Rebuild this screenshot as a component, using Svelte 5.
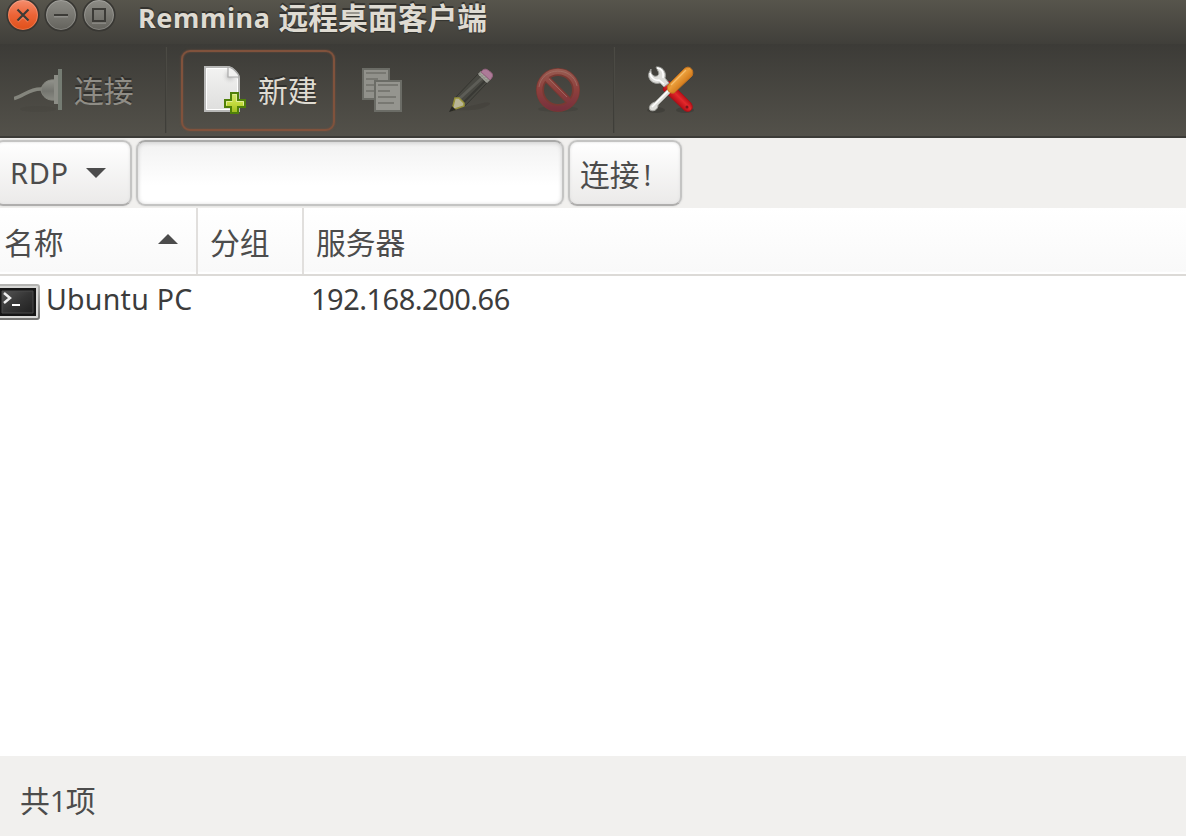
<script>
  const columns = ['名称', '分组', '服务器'];
  const connections = [{ name: 'Ubuntu PC', group: '', server: '192.168.200.66' }];
  let address = $state('');
</script>

<div class="window">
  <header class="titlebar">
    <svg class="controls" width="116" height="34" viewBox="0 0 116 34">
      <defs>
        <linearGradient id="close" x1="0" y1="0" x2="0" y2="1">
          <stop offset="0" stop-color="#f58f70" /><stop offset=".5" stop-color="#ec6437" /><stop offset="1" stop-color="#df4f18" />
        </linearGradient>
        <linearGradient id="ctl" x1="0" y1="0" x2="0" y2="1">
          <stop offset="0" stop-color="#8e8d87" /><stop offset="1" stop-color="#63625c" />
        </linearGradient>
      </defs>
      <g stroke="#383733" stroke-width="1.6">
        <circle cx="23" cy="15" r="15.8" fill="url(#close)" />
        <circle cx="61" cy="15" r="15.8" fill="url(#ctl)" />
        <circle cx="99" cy="15" r="15.8" fill="url(#ctl)" />
      </g>
      <g fill="none" stroke="#fff" stroke-opacity=".18" stroke-width="1">
        <circle cx="23" cy="15" r="14.5" /><circle cx="61" cy="15" r="14.5" /><circle cx="99" cy="15" r="14.5" />
        <path stroke-width="1.5" d="M18 22l5-5 5 5M54 16.8h14M92 23.2h14" />
      </g>
      <g fill="none" stroke="#3c3b37" stroke-width="2.2">
        <path d="M17.5 9.5l11 11M28.5 9.5l-11 11" />
        <path stroke-width="2" d="M54 15h14M93 9h12v12h-12z" />
      </g>
    </svg>
    <h1><span class="latin">Remmina</span><span>远程桌面客户端</span></h1>
  </header>

  <nav class="toolbar">
    <button class="tool connect" disabled>
      <svg width="50" height="46" viewBox="0 0 50 46">
        <defs>
          <linearGradient id="plug" x1="0" y1="0" x2="0" y2="1">
            <stop offset="0" stop-color="#92938c" /><stop offset=".55" stop-color="#74756f" /><stop offset="1" stop-color="#898a83" />
          </linearGradient>
        </defs>
        <ellipse cx="24" cy="42" rx="18" ry="3" fill="#3e3d38" opacity=".18" />
        <path d="M0 31.500C10 29 16 21 28 22" fill="none" stroke="#84857d" stroke-width="3.500" />
        <path d="M41 13v20c-7 1-13-3-14-10 1-7 7-11 14-10z" fill="url(#plug)" stroke="#85867e" />
        <path d="M40 8h4v29h-4z" fill="#8c8d86" />
        <path d="M44 2h4v41h-4z" fill="#757c73" />
      </svg>
      <span>连接</span>
    </button>
    <i class="separator"></i>
    <button class="tool new">
      <svg width="44" height="50" viewBox="0 0 44 50">
        <defs>
          <linearGradient id="paper" x1="0" y1="0" x2="0" y2="1">
            <stop offset="0" stop-color="#f3f3f2" /><stop offset="1" stop-color="#dededd" />
          </linearGradient>
          <radialGradient id="fold"><stop offset="0" stop-color="#999" /><stop offset="1" stop-color="#eee" stop-opacity="0" /></radialGradient>
          <linearGradient id="plus" x1="0" y1="0" x2="0" y2="1">
            <stop offset="0" stop-color="#d3e575" /><stop offset=".5" stop-color="#c5dc40" /><stop offset="1" stop-color="#9dbb1c" />
          </linearGradient>
        </defs>
        <path d="M1 1h24c4 1 10 7 10 11v33H1z" fill="url(#paper)" stroke="#b8b8b7" stroke-width="2" />
        <path d="M2.500 2.500h22M2.500 2.500v41h31V13" fill="none" stroke="#fff" />
        <circle cx="26" cy="10" r="9" fill="url(#fold)" opacity=".65" />
        <path d="M24 1v10h11c0-3-7-10-11-10z" fill="#f1f1f0" stroke="#aaa" stroke-width="1.200" />
        <path d="M27 27h7v7h7v7h-7v6h-7v-6h-6v-7h6z" fill="url(#plus)" stroke="#50800a" stroke-width="2" />
        <path d="M28.500 28.500h4v7h7v4M28.500 35.500h-6v4" fill="none" stroke="#e2ed98" stroke-width="1" />
      </svg>
      <span>新建</span>
    </button>
    <button class="tool icon" disabled aria-label="copy">
      <svg width="44" height="44" viewBox="0 0 44 44">
        <g stroke="#6b6c66" stroke-width="2">
          <path d="M1 1h26v30H1z" fill="#91918b" />
          <path d="M13 13h26v30H13z" fill="#95958f" />
        </g>
        <g stroke="#787872" stroke-width="2">
          <path d="M4 5h20M4 11h12M4 17h8M4 23h8M16 17h20M16 23h12M16 29h18M16 35h16" />
        </g>
      </svg>
    </button>
    <button class="tool icon" disabled aria-label="edit">
      <svg width="44" height="44" viewBox="0 0 44 44">
        <path d="M4 42L34 35c5-1 9 0 6 2-8 5-19 6-36 5z" fill="#3e3d38" opacity=".4" />
        <path d="M5 31L29 6l9 9-23 24-6-6z" fill="#484842" stroke="#34342f" stroke-width="1" />
        <path d="M10 31L33 10" stroke="#5d5d57" stroke-width="3" />
        <path d="M13 36L36 13" stroke="#383834" stroke-width="2" />
        <path d="M6 30h4l5 5v3L3 42z" fill="#b8b596" stroke="#989239" stroke-width="1.500" />
        <path d="M0 44l3-6 4 4z" fill="#282824" />
        <path d="M29 6l3-3 9 9-3 3z" fill="#92928b" stroke="#74746e" stroke-width="1" />
        <path d="M30.500 7l7 7M32 5.500l7 7" stroke="#b7b7ad" stroke-width="1" stroke-dasharray="2 1" />
        <path d="M32 4c2-3 5-4 8-1 4 2 5 5 1 9z" fill="#ad7b98" stroke="#95627f" />
      </svg>
    </button>
    <button class="tool icon" disabled aria-label="delete">
      <svg width="44" height="44" viewBox="0 0 44 44">
        <defs>
          <linearGradient id="ban" gradientUnits="userSpaceOnUse" x1="0" y1="0" x2="0" y2="44">
            <stop offset="0" stop-color="#985d52" /><stop offset=".5" stop-color="#8e3f3c" /><stop offset="1" stop-color="#742f3d" />
          </linearGradient>
        </defs>
        <ellipse cx="22" cy="41" rx="20" ry="3" fill="#34332e" opacity=".25" />
        <g fill="none">
          <circle cx="22" cy="22" r="18" stroke="#793932" stroke-width="8" />
          <path d="M10 10l24 24" stroke="#793932" stroke-width="7" />
          <circle cx="22" cy="22" r="18.500" stroke="url(#ban)" stroke-width="5.500" />
          <path d="M10 10l24 24" stroke="url(#ban)" stroke-width="5" />
          <path d="M3 19C6-2 37-2 41 18M13 11l18 18" stroke="#a57469" stroke-width="1" opacity=".7" />
        </g>
      </svg>
    </button>
    <i class="separator second"></i>
    <button class="tool prefs" aria-label="preferences">
      <svg width="48" height="48" viewBox="0 0 48 48">
        <defs>
          <linearGradient id="orange" gradientUnits="userSpaceOnUse" x1="29" y1="8" x2="39" y2="18">
            <stop offset="0" stop-color="#d88121" /><stop offset=".4" stop-color="#e99c38" /><stop offset="1" stop-color="#cf7416" />
          </linearGradient>
          <linearGradient id="red" gradientUnits="userSpaceOnUse" x1="37" y1="28" x2="29" y2="36">
            <stop offset="0" stop-color="#a80b12" /><stop offset=".5" stop-color="#e3282b" /><stop offset="1" stop-color="#b80f17" />
          </linearGradient>
        </defs>
        <ellipse cx="9" cy="44" rx="9" ry="3" fill="#282723" opacity=".3" /><ellipse cx="38" cy="44" rx="9" ry="3" fill="#282723" opacity=".3" />
        <path d="M17 20l5-5 22 22c4 6-2 11-7 7L16 24z" fill="url(#red)" stroke="#a3131a" />
        <path d="M4 3c0 3 0 5 3 7 4 1 6-2 4-5L9 1c6-1 11 5 9 11l4 5-5 4-4-4C6 19 0 13 2 7z" fill="#dededb" stroke="#9c9d99" stroke-width="1" />
        <path d="M3 7c1 5 5 8 9 7l5 4M10 2c5 0 7 5 6 10" fill="none" stroke="#fff" stroke-width="1.500" />
        <path d="M22 22l3 3-14 14c0 5-5 7-8 5-2-3 1-7 5-8z" fill="#deded9" stroke="#a5a5a0" />
        <path d="M22 24L5 41" stroke="#fff" stroke-width="1.500" />
        <path d="M21 19L37 3c5-5 11 1 8 7L27 27c-5 1-8-4-6-8z" fill="url(#orange)" stroke="#c07220" />
        <path d="M24 19L39 4" stroke="#ffd083" stroke-width="1.500" opacity=".7" />
        <circle cx="40" cy="41" r="1.500" fill="#79141a" />
      </svg>
    </button>
  </nav>

  <form class="quick" onsubmit={(e) => e.preventDefault()}>
    <button type="button" class="btn protocol"><span>RDP</span><svg width="20" height="10"><path d="M0 0h20L10 10z" fill="#4c4c4c" /></svg></button>
    <input aria-label="address" bind:value={address} />
    <button class="btn go"><span>连接</span><span class="bang">!</span></button>
  </form>

  <section class="list">
    <div class="row head">
      {#each columns as column, i}
        <div class="cell">{column}{#if i === 0}<svg width="20" height="10"><path d="M0 10h20L10 0z" fill="#4c4c4c" /></svg>{/if}</div>
      {/each}
    </div>
    {#each connections as item}
      <div class="row entry">
        <div class="name">
          <svg width="40" height="38" viewBox="0 0 40 38">
            <defs>
              <linearGradient id="frame" x1="0" y1="0" x2="0" y2="1"><stop offset="0" stop-color="#b5b5b3" /><stop offset="1" stop-color="#747472" /></linearGradient>
              <linearGradient id="screen" x1="0" y1="0" x2="1" y2="1"><stop offset="0" stop-color="#555" /><stop offset=".5" stop-color="#353535" /><stop offset="1" stop-color="#202020" /></linearGradient>
            </defs>
            <path d="M0 1h37q2 0 2 2v30q0 2-2 2H0" fill="#d8d8d6" stroke="url(#frame)" stroke-width="2" />
            <path d="M0 4h36v28H0z" fill="#151515" />
            <path d="M2 7h31v22H2z" fill="url(#screen)" stroke="#4b4b4b" stroke-width="1" />
            <path d="M4 9l6 5-6 5" fill="none" stroke="#eee" stroke-width="2.500" />
            <path d="M12 21h8" stroke="#fff" stroke-width="2" />
          </svg>
          <span>{item.name}</span>
        </div>
        <div>{item.group}</div>
        <div class="server">{item.server}</div>
      </div>
    {/each}
  </section>

  <footer>共<span>1</span>项</footer>
</div>

<style>
  .window {
    width: 1186px; height: 836px; display: flex; flex-direction: column; overflow: hidden;
    background: #fff; color: #4c4c4c;
    font: 29.8px/40px "Open Sans", "Noto Sans CJK SC", sans-serif;
  }
  button, input { font: inherit; color: inherit; margin: 0; box-sizing: border-box; }
  svg { display: block; flex: none; }
  .titlebar { flex: none; height: 44px; display: flex; background: linear-gradient(#57554c, #403f3a); }
  h1 {
    display: flex; gap: 8px; margin: 0 0 0 22px; font-size: 29.8px; line-height: 35px; font-weight: 700;
    color: #dfdbd2; text-shadow: 0 -2px #34332f, 0 1px 1px #34332f;
  }
  .latin { font-family: "Noto Sans", sans-serif; font-size: 27px; letter-spacing: .6px; line-height: 35px; }
  .toolbar {
    flex: none; height: 94px; display: flex; align-items: center; box-sizing: border-box;
    background: linear-gradient(#3c3b37, #53514a); border-bottom: 2px solid #3c3b37;
  }
  .tool { flex: none; padding: 0; border: 0; background: none; display: flex; align-items: center; }
  .tool span { padding-top: 1px; }
  .connect { margin-left: 14px; width: 151px; gap: 10px; color: #8f8d86; text-shadow: 0 -2px #302f2c; }
  .separator { flex: none; width: 1px; height: 86px; background: #3f3e39; border-right: 1px solid #4b4a44; }
  .new {
    width: 154px; height: 81px; margin: 1px 27px 0 14px; padding-left: 21px; gap: 10px;
    border: 2px solid #80523c; border-radius: 9px; color: #dfdbd2;
    box-shadow: 0 0 2px #76503e, inset 0 0 2px #76503e; text-shadow: 0 -2px #302f2c;
  }
  .icon { margin-right: 44px; }
  .icon:nth-of-type(4) { margin-left: -2px; }
  .icon:nth-of-type(4) { margin-left: -1px; margin-right: 43px; }
  .second { margin-left: -11px; }
  .prefs { margin-left: 32px; }
  .quick { flex: none; height: 70px; display: flex; gap: 4px; box-sizing: border-box; padding: 2px 0; background: #f1f0ee; }
  .btn, input { height: 66px; border: 2px solid #c4c4c3; border-radius: 9px; }
  .btn {
    display: flex; align-items: center; background: linear-gradient(#fff, #ebeae9);
    border-bottom-color: #afaead; box-shadow: inset 0 0 3px #ddd, 0 0 2px #ccc; padding: 0;
  }
  .protocol { width: 138px; margin-left: -6px; padding-left: 14px; gap: 17px; }
  .protocol span { width: 59px; font-family: "Noto Sans", sans-serif; font-size: 29px; letter-spacing: .7px; text-align: left; }
  input {
    width: 428px; outline: 0; padding: 0 10px;
    border-top-color: #a9a9a8; background: linear-gradient(#f2f2f2, #fff 70%);
    box-shadow: inset 0 1px 4px #ccc, 0 0 2px #ccc;
  }
  .go { width: 114px; padding: 4px 0 0 10px; }
  .bang { margin-left: 4px; font-weight: 500; }
  .list { flex: 1; background: #fff; }
  .row { display: grid; grid-template-columns: 198px 106px 1fr; }
  .head { height: 68px; box-sizing: border-box; border-bottom: 2px solid #dcdad7; background: linear-gradient(#fff, #f9f9f9 96%, #fff 97%); }
  .cell { display: flex; align-items: center; justify-content: space-between; padding: 4px 18px 0 12px; border-right: 2px solid #e1dfdd; }
  .cell:first-child { padding-left: 4px; }
  .cell:last-child { border: 0; }
  .cell svg { margin-top: -8px; }
  .entry { height: 50px; align-items: center; color: #3c3c3c; }
  .name { display: flex; align-items: center; gap: 6px; white-space: nowrap; }
  .name svg { margin-top: 4px; }
  .name span { font-family: "Noto Sans", sans-serif; font-size: 28.5px; letter-spacing: .25px; margin-top: -4px; }
  .server { padding-left: 7px; margin-top: -4px; font-family: "Noto Sans", sans-serif; font-size: 29px; letter-spacing: -.5px; }
  footer { flex: none; height: 80px; box-sizing: border-box; padding: 25px 20px 0; background: #f1f0ee; }
  footer span { letter-spacing: -1.2px; }
</style>
